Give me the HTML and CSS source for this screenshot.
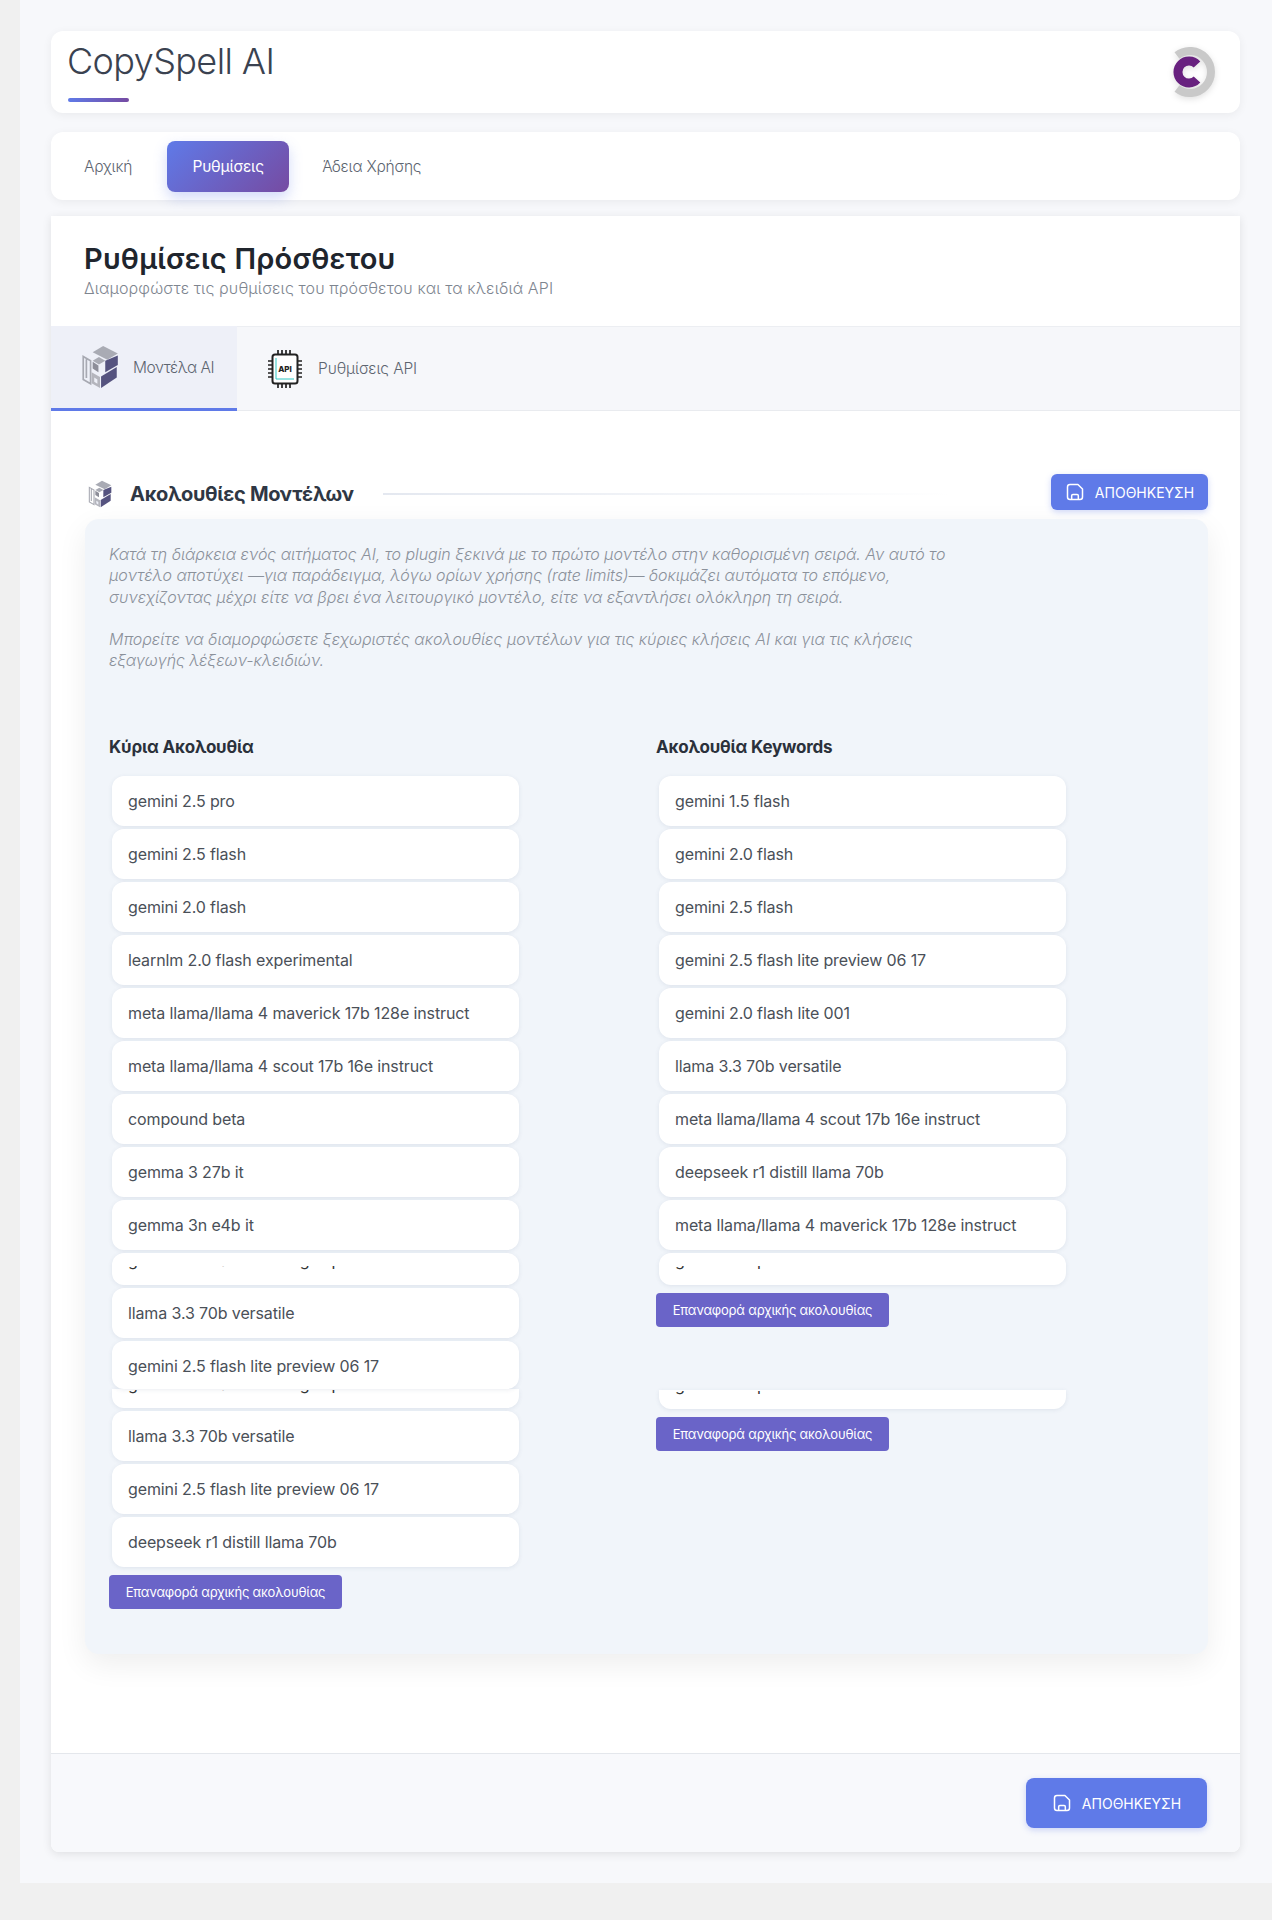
FILE: index.html
```html
<!DOCTYPE html>
<html lang="el">
<head>
  <meta charset="UTF-8" />
  <title>CopySpell AI - Ρυθμίσεις</title>
  <link rel="stylesheet" href="styles.css">
</head>
<body>

  <svg class="sprite" width="0" height="0">
    <symbol id="icon-cube" viewBox="0 0 36 42">
      <path d="M2 11v22l7 4V15z M5 13.500v18" fill="none" stroke="#a7a9b2" stroke-width="1.600"/>
      <polygon points="11,7 21,1 35,8 25,14" fill="#a9abb4"/>
      <polygon points="35,10 35,19 23,26 23,15" fill="#55537f"/>
      <polygon points="11,15 17,11.500 23,15 17,18.500" fill="#a9abb4"/>
      <polygon points="11,16 16.500,19.500 16.500,26 11,22.500" fill="#8d8e99"/>
      <polygon points="34,21 34,31 19,41 19,30" fill="#55537f"/>
      <polygon points="10,26 18,30.500 18,41 10,36.500" fill="#b4b5bd"/>
      <polygon points="12.500,31 15.500,33 15.500,37 12.500,35" fill="#eef0f8"/>
    </symbol>
    <symbol id="icon-save" viewBox="0 0 24 24">
      <path d="M6 3h9.500L21 8.500V18a3 3 0 0 1-3 3H6a3 3 0 0 1-3-3V6a3 3 0 0 1 3-3z M8 21v-4.500a1.500 1.500 0 0 1 1.500-1.500h5a1.500 1.500 0 0 1 1.500 1.500V21" fill="none" stroke="#fff" stroke-width="1.800" stroke-linejoin="round"/>
    </symbol>
  </svg>

  <div class="wrap">

    <header class="top-card">
      <div>
        <h1 class="brand">CopySpell AI</h1>
        <div class="brand-line"></div>
      </div>
      <svg class="logo" viewBox="0 0 44 50" width="44" height="50">
        <path d="M5 8.500A21 21 0 1 1 5 41.500" fill="none" stroke="#c9c9c9" stroke-width="8"/>
        <path d="M25 17.500A11 11 0 1 0 25 32.500" fill="none" stroke="#68217f" stroke-width="9"/>
      </svg>
    </header>

    <nav class="main-nav">
      <a href="#">Αρχική</a>
      <a href="#" class="active">Ρυθμίσεις</a>
      <a href="#">Άδεια Χρήσης</a>
    </nav>

    <main class="settings">
      <div class="settings-head">
        <h2>Ρυθμίσεις Πρόσθετου</h2>
        <p>Διαμορφώστε τις ρυθμίσεις του πρόσθετου και τα κλειδιά API</p>
      </div>

      <div class="tabs">
        <a href="#" class="tab active">
          <svg class="tab-icon-cube"><use href="#icon-cube"/></svg>
          Μοντέλα AI
        </a>
        <a href="#" class="tab">
          <svg class="tab-icon-chip" viewBox="0 0 36 40">
            <path d="M11 1v5M15 1v5M19 1v5M23 1v5M11 34v5M15 34v5M19 34v5M23 34v5M1 12h5M1 16h5M1 20h5M1 24h5M1 28h5M30 12h5M30 16h5M30 20h5M30 24h5M30 28h5" stroke="#222" stroke-width="1.700"/>
            <rect x="5.500" y="5.500" width="25" height="29" rx="2.500" fill="#fff" stroke="#222" stroke-width="2"/>
            <path d="M9 9v21h18" fill="none" stroke="#2fc7c4" stroke-width="1"/>
            <text x="18" y="22.500" text-anchor="middle" class="chip-text">API</text>
          </svg>
          Ρυθμίσεις API
        </a>
      </div>

      <div class="settings-body">
        <div class="section-title">
          <svg class="title-icon"><use href="#icon-cube"/></svg>
          <h3>Ακολουθίες Μοντέλων</h3>
          <div class="title-line"></div>
          <button class="btn-save"><svg class="save-icon"><use href="#icon-save"/></svg>ΑΠΟΘΗΚΕΥΣΗ</button>
        </div>

        <div class="panel">
          <p class="note">Κατά τη διάρκεια ενός αιτήματος AI, το plugin ξεκινά με το πρώτο μοντέλο στην καθορισμένη σειρά. Αν αυτό το<br>
          μοντέλο αποτύχει —για παράδειγμα, λόγω ορίων χρήσης (rate limits)— δοκιμάζει αυτόματα το επόμενο,<br>
          συνεχίζοντας μέχρι είτε να βρει ένα λειτουργικό μοντέλο, είτε να εξαντλήσει ολόκληρη τη σειρά.</p>
          <p class="note">Μπορείτε να διαμορφώσετε ξεχωριστές ακολουθίες μοντέλων για τις κύριες κλήσεις AI και για τις κλήσεις<br>
          εξαγωγής λέξεων-κλειδιών.</p>

          <div class="columns">
            <div class="col">
              <h4>Κύρια Ακολουθία</h4>
              <ul class="model-list">
                <li>gemini 2.5 pro</li>
                <li>gemini 2.5 flash</li>
                <li>gemini 2.0 flash</li>
                <li>learnlm 2.0 flash experimental</li>
                <li>meta llama/llama 4 maverick 17b 128e instruct</li>
                <li>meta llama/llama 4 scout 17b 16e instruct</li>
                <li>compound beta</li>
                <li>gemma 3 27b it</li>
                <li>gemma 3n e4b it</li>
                <li class="cut-mid"><span class="cut-text"><span>gemini 2.0 flash thinking exp</span></span></li>
                <li>llama 3.3 70b versatile</li>
                <li class="over">gemini 2.5 flash lite preview 06 17</li>
                <li class="cut-low"><span class="cut-text"><span>gemini 2.0 flash thinking exp</span></span></li>
                <li>llama 3.3 70b versatile</li>
                <li>gemini 2.5 flash lite preview 06 17</li>
                <li>deepseek r1 distill llama 70b</li>
              </ul>
              <button class="btn-reset">Επαναφορά αρχικής ακολουθίας</button>
            </div>

            <div class="col">
              <h4>Ακολουθία Keywords</h4>
              <ul class="model-list">
                <li>gemini 1.5 flash</li>
                <li>gemini 2.0 flash</li>
                <li>gemini 2.5 flash</li>
                <li>gemini 2.5 flash lite preview 06 17</li>
                <li>gemini 2.0 flash lite 001</li>
                <li>llama 3.3 70b versatile</li>
                <li>meta llama/llama 4 scout 17b 16e instruct</li>
                <li>deepseek r1 distill llama 70b</li>
                <li>meta llama/llama 4 maverick 17b 128e instruct</li>
                <li class="cut-mid"><span class="cut-text"><span>gemini 2.5 pro</span></span></li>
              </ul>
              <button class="btn-reset">Επαναφορά αρχικής ακολουθίας</button>
              <ul class="model-list repeat">
                <li class="cut-low"><span class="cut-text"><span>gemini 2.5 pro</span></span></li>
              </ul>
              <button class="btn-reset">Επαναφορά αρχικής ακολουθίας</button>
            </div>
          </div>
        </div>
      </div>

      <footer class="settings-foot">
        <button class="btn-save big"><svg class="save-icon"><use href="#icon-save"/></svg>ΑΠΟΘΗΚΕΥΣΗ</button>
      </footer>
    </main>

  </div>

</body>
</html>
```

FILE: styles.css
```css
* {
  box-sizing: border-box;
}
body {
  margin: 0;
  background: #f0f0f0;
  font-family: Inter, 'Noto Sans', sans-serif;
  color: #333;
}
.sprite {
  display: block;
  height: 0;
}
.chip-text {
  font-family: Inter, sans-serif;
  font-size: 8px;
  font-weight: 800;
  fill: #222;
}
.wrap {
  margin-left: 20px;
  height: 1883px;
  padding: 31px 32px 0 31px;
  background: #f7f8fb;
}
.top-card {
  display: flex;
  justify-content: space-between;
  align-items: center;
  height: 82px;
  padding: 0 24px 0 16px;
  background: white;
  border-radius: 12px;
  box-shadow: 0 2px 10px rgba(0,0,0,0.06);
}
.brand {
  margin: -4px 0 0;
  font-size: 36px;
  line-height: 44px;
  font-weight: 300;
  color: #3a4250;
  letter-spacing: -0.6px;
}
.brand-line {
  width: 61px;
  height: 4px;
  margin-top: 15px;
  margin-left: 1px;
  border-radius: 2px;
  background: linear-gradient(90deg, #5f7ae8, #764ba2);
}
.logo {
  display: block;
  filter: drop-shadow(0 2px 3px rgba(0,0,0,0.12));
}
.main-nav {
  display: flex;
  align-items: center;
  gap: 0;
  height: 68px;
  margin-top: 19px;
  padding: 0 0 0 33px;
  background: white;
  border-radius: 12px;
  box-shadow: 0 2px 10px rgba(0,0,0,0.06);
}
.main-nav a {
  font-size: 15.500px;
  font-weight: 300;
  color: #5d6570;
  text-decoration: none;
  letter-spacing: -0.2px;
}
.main-nav a.active {
  display: flex;
  align-items: center;
  justify-content: center;
  width: 122px;
  height: 51px;
  margin: 0 33px 0 35px;
  color: white;
  font-weight: 400;
  border-radius: 8px;
  background: linear-gradient(135deg, #5f7ae8, #764ba2);
  box-shadow: 0 6px 14px rgba(95,122,232,0.28);
}
.settings {
  height: 1636px;
  margin-top: 16px;
  display: flex;
  flex-direction: column;
  background: white;
  border-radius: 0 0 8px 8px;
  box-shadow: 0 2px 10px rgba(0,0,0,0.1);
}
.settings-head {
  height: 110px;
  padding: 24px 33px 0;
}
.settings-head h2 {
  margin: 0;
  font-size: 29px;
  line-height: 38px;
  font-weight: 600;
  color: #20252d;
  letter-spacing: 0.2px;
}
.settings-head p {
  margin: 0;
  font-size: 16px;
  line-height: 20px;
  font-weight: 300;
  color: #7e858f;
  letter-spacing: 0.13px;
}
.tabs {
  display: flex;
  height: 85px;
  background: #f6f7fa;
  border-top: 1px solid #eceef2;
  border-bottom: 1px solid #e9ebef;
}
.tab {
  display: flex;
  align-items: center;
  gap: 13px;
  height: 85px;
  padding: 0 24px 0 30px;
  margin-top: -1px;
  font-size: 15.500px;
  font-weight: 300;
  color: #5d6570;
  text-decoration: none;
  letter-spacing: -0.1px;
  white-space: nowrap;
}
.tab.active {
  width: 186px;
  gap: 14px;
  letter-spacing: -0.5px;
  background: #eef0f8;
  border-bottom: 3px solid #5f7ae8;
}
.tab-icon-cube {
  width: 38px;
  height: 44px;
  flex: none;
}
.tab-icon-chip {
  width: 36px;
  height: 40px;
  flex: none;
  margin-right: 2px;
}
.settings-body {
  flex: 1;
  padding: 63px 32px 0 34px;
}
.section-title {
  display: flex;
  align-items: center;
  height: 36px;
}
.title-icon {
  width: 24px;
  height: 28px;
  margin-left: 3px;
  margin-top: 3px;
}
.section-title h3 {
  margin: 4px 29px 0 18px;
  font-size: 20px;
  font-weight: 700;
  color: #2f3744;
  letter-spacing: -0.3px;
}
.title-line {
  flex: 1;
  height: 2px;
  margin-top: 3px;
  margin-right: 100px;
  background: linear-gradient(90deg, #e4e8f0, rgba(255,255,255,0));
}
.btn-save {
  display: flex;
  flex: none;
  align-items: center;
  justify-content: center;
  gap: 10px;
  width: 157px;
  height: 36px;
  padding: 0;
  border: none;
  border-radius: 6px;
  font-family: inherit;
  font-size: 14px;
  font-weight: 400;
  color: white;
  background: #5f7ae8;
  box-shadow: 0 2px 6px rgba(95,122,232,0.3);
}
.save-icon {
  width: 20px;
  height: 20px;
}
.btn-save.big {
  width: 181px;
  height: 50px;
  border-radius: 8px;
}
.panel {
  height: 1135px;
  margin-top: 9px;
  padding: 25px 24px 0;
  background: #f1f5fa;
  border-radius: 14px;
  box-shadow: 0 10px 30px rgba(0,0,0,0.07);
}
.note {
  margin: 0 0 21px;
  font-size: 16px;
  line-height: 21.3px;
  font-style: italic;
  font-weight: 300;
  color: #8b919a;
  letter-spacing: -0.05px;
}
.columns {
  display: flex;
  margin-top: 65px;
}
.col {
  flex: none;
  width: 547px;
}
.col h4 {
  margin: 0 0 18px;
  font-size: 17px;
  line-height: 22px;
  font-weight: 700;
  color: #2b313b;
  letter-spacing: -0.2px;
}
.model-list {
  list-style: none;
  width: 407px;
  margin: 0 0 8px 3px;
  padding: 0;
}
.model-list li {
  height: 50px;
  margin-bottom: 3px;
  padding: 0 16px;
  line-height: 50px;
  font-size: 16px;
  font-weight: 400;
  color: #4a5058;
  letter-spacing: -0.12px;
  background: white;
  border-radius: 12px;
  box-shadow: 0 1px 4px rgba(60,80,120,0.1);
}
.model-list li.over {
  position: relative;
  height: 48px;
  margin-bottom: 0;
}
.model-list li.cut-mid {
  height: 32px;
}
.model-list li.cut-low {
  height: 19px;
  border-radius: 0 0 12px 12px;
}
.model-list li.cut-mid,
.model-list li.cut-low {
  padding-top: 1px;
  line-height: 1;
}
.cut-text {
  display: block;
  height: 5px;
  margin-top: 12px;
  overflow: hidden;
  line-height: 20px;
  color: #333;
}
.cut-text span {
  display: block;
  margin-top: -16px;
}
.cut-low .cut-text {
  height: 4px;
  margin-top: 0;
}
.btn-reset {
  display: block;
  height: 34px;
  width: 233px;
  padding: 0;
  border: none;
  border-radius: 4px;
  font-family: inherit;
  font-size: 13px;
  font-weight: 400;
  color: white;
  background: #6a64c8;
  letter-spacing: -0.2px;
}
.model-list.repeat {
  margin-top: 63px;
}
.settings-foot {
  display: flex;
  justify-content: flex-end;
  align-items: center;
  height: 99px;
  padding-right: 33px;
  background: #f8f9fc;
  border-top: 1px solid #e4e7ec;
  border-radius: 0 0 8px 8px;
}
```
